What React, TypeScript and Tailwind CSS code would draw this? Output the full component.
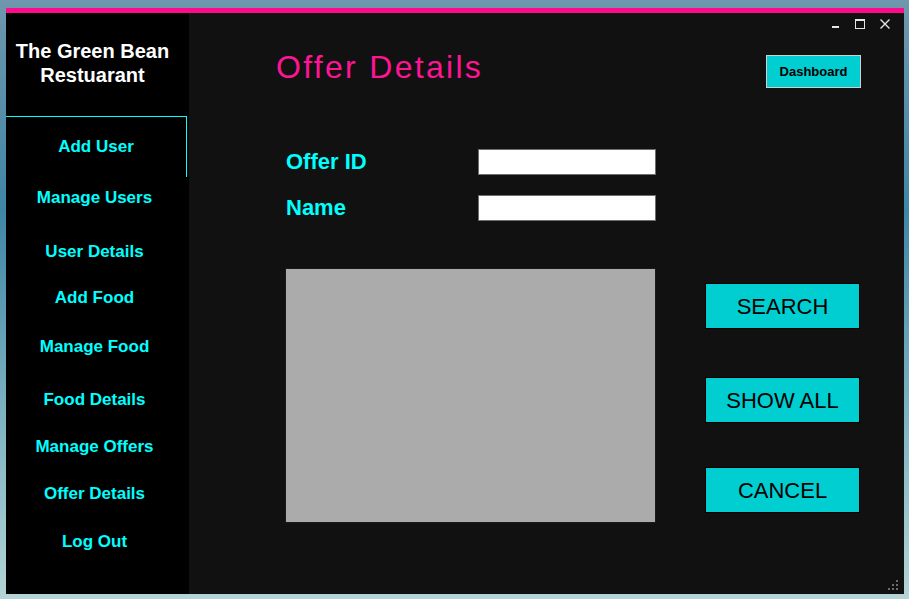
import React from 'react';

type NavItem = { label: string; spacing: string };

// spacing above each link, taken from the screenshot (not a regular rhythm)
const navItems: NavItem[] = [
  { label: 'Manage Users', spacing: 'mt-[11px]' },
  { label: 'User Details', spacing: 'mt-[34px]' },
  { label: 'Add Food', spacing: 'mt-[26px]' },
  { label: 'Manage Food', spacing: 'mt-[29px]' },
  { label: 'Food Details', spacing: 'mt-[33px]' },
  { label: 'Manage Offers', spacing: 'mt-[27px]' },
  { label: 'Offer Details', spacing: 'mt-[27px]' },
  { label: 'Log Out', spacing: 'mt-[28px]' },
];

const actions: { label: string; spacing: string }[] = [
  { label: 'SEARCH', spacing: 'mt-[15px]' },
  { label: 'SHOW ALL', spacing: 'mt-[48px]' },
  { label: 'CANCEL', spacing: 'mt-[44px]' },
];

const WindowControls: React.FC = () => (
  <div className="absolute top-[6px] right-[14px] flex items-center gap-[15px]">
    <svg width="9" height="10" viewBox="0 0 9 10">
      <rect x="1" y="7" width="7" height="2" fill="#e6e6e6" />
    </svg>
    <svg width="10" height="10" viewBox="0 0 10 10">
      <rect x="0.5" y="0.5" width="9" height="9" fill="none" stroke="#e6e6e6" />
      <rect x="0.5" y="0.5" width="9" height="1.5" fill="#e6e6e6" />
    </svg>
    <svg width="10" height="10" viewBox="0 0 10 10">
      <path d="M0.5 0.5 L9.5 9.5 M9.5 0.5 L0.5 9.5" stroke="#e6e6e6" strokeWidth="1.4" />
    </svg>
  </div>
);

const ResizeGrip: React.FC = () => (
  <svg className="absolute right-[4px] bottom-[2px]" width="12" height="12" viewBox="0 0 12 12">
    <rect x="8" y="0" width="2" height="2" fill="#6b6b6b" />
    <rect x="4" y="4" width="2" height="2" fill="#6b6b6b" />
    <rect x="8" y="4" width="2" height="2" fill="#6b6b6b" />
    <rect x="0" y="8" width="2" height="2" fill="#6b6b6b" />
    <rect x="4" y="8" width="2" height="2" fill="#6b6b6b" />
    <rect x="8" y="8" width="2" height="2" fill="#6b6b6b" />
  </svg>
);

export default function App() {
  return (
    <div
      className="w-[909px] h-[599px] overflow-hidden pt-[8px] pl-[6px] bg-[linear-gradient(180deg,#6f97ad_0%,#3f86a6_35%,#7fb3c2_70%,#b4d4d6_100%)]"
      style={{ fontFamily: '"Liberation Sans", Arial, sans-serif' }}
    >
      <div className="w-[898px] h-[586px] flex flex-col bg-[#111111]">
        <div className="h-[5px] bg-[#ff0a8a]" />

        <div className="flex flex-1 min-h-0">
          {/* sidebar */}
          <aside className="w-[183px] bg-black flex flex-col">
            <div className="h-[103px] pt-[26px] pr-[10px] text-center text-white font-bold text-[20px] leading-[24px]">
              The Green Bean
              <br />
              Restuarant
            </div>

            <div className="w-[181px] h-[61px] border-t border-r border-[#00ffff] flex items-center justify-center text-[#00ffff] font-bold text-[17px]">
              Add User
            </div>

            {navItems.map((item) => (
              <div
                key={item.label}
                className={`${item.spacing} h-[20px] leading-[20px] text-center pr-[6px] text-[#00ffff] font-bold text-[17px]`}
              >
                {item.label}
              </div>
            ))}
          </aside>

          {/* content */}
          <main className="relative flex-1 flex flex-col">
            <WindowControls />

            <div className="flex items-start justify-between pl-[87px] pr-[43px] mt-[38px]">
              <h1 className="text-[32px] leading-[32px] h-[32px] tracking-[2.3px] text-[#ff1493]">
                Offer Details
              </h1>
              <button className="mt-[4px] w-[95px] h-[33px] bg-[#00ced1] border border-[#d0d0d0] text-black font-bold text-[13px]">
                Dashboard
              </button>
            </div>

            <div className="mt-[61px] pl-[97px] grid grid-cols-[192px_178px] gap-y-[20px] items-center">
              <label className="text-[#00ffff] font-bold text-[22px] leading-[26px]">Offer ID</label>
              <input className="h-[26px] bg-white border border-[#6e6e6e] outline-none" />
              <label className="text-[#00ffff] font-bold text-[22px] leading-[26px]">Name</label>
              <input className="h-[26px] bg-white border border-[#6e6e6e] outline-none" />
            </div>

            <div className="mt-[47px] pl-[96px] flex items-start gap-[49px]">
              <div className="w-[371px] h-[255px] bg-[#ababab] border border-[#1a1a1a]" />
              <div className="flex flex-col">
                {actions.map((a) => (
                  <button
                    key={a.label}
                    className={`${a.spacing} w-[155px] h-[46px] bg-[#00ced1] border border-black text-black text-[22px]`}
                  >
                    {a.label}
                  </button>
                ))}
              </div>
            </div>

            <ResizeGrip />
          </main>
        </div>
      </div>
    </div>
  );
}
